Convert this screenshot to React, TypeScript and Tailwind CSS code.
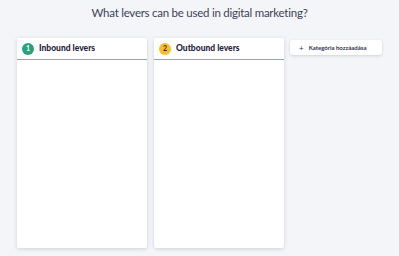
export default function App() {
  return (
    <div className="w-[399px] h-[256px] bg-[#f4f5f9] overflow-hidden" style={{ fontFamily: "Lato, 'Open Sans', sans-serif" }}>
      <div className="pt-[5px] text-center text-[11.5px] tracking-[-0.25px] leading-[16px] text-[#3d4258]">What levers can be used in digital marketing?</div>
      <div className="flex items-start gap-[7px] pl-[17px] pt-[17px]">
        <Column n="1" title="Inbound levers" color="bg-[#27a37c]" textColor="text-white" />
        <Column n="2" title="Outbound levers" color="bg-[#f7bd2f]" textColor="text-[#3a2a00]" />
        <button className="ml-[-1px] mt-[2px] w-[92px] h-[15px] bg-white rounded-[3px] shadow-[0_1px_3px_rgba(0,0,0,0.15)] flex items-center pl-[9px] gap-[5px] text-[6px] font-bold text-[#2d3250]">
          <span className="text-[8px] font-normal leading-none">+</span>
          <span>Kategória hozzáadása</span>
        </button>
      </div>
    </div>
  );
}

function Column({ n, title, color, textColor }: { n: string; title: string; color: string; textColor: string }) {
  return (
    <div className="w-[130px] h-[210px] bg-white rounded-[2px] shadow-[0_1px_4px_rgba(0,0,0,0.15)] flex flex-col">
      <div className="h-[22px] flex items-center pl-[5px] gap-[5px] border-b-[1.5px] border-[#9ea0a8]">
        <span className={`w-[12px] h-[12px] rounded-full ${color} ${textColor} flex items-center justify-center text-[7px] font-bold`}>{n}</span>
        <span className="text-[8.5px] font-black text-[#1f2340]">{title}</span>
      </div>
    </div>
  );
}
